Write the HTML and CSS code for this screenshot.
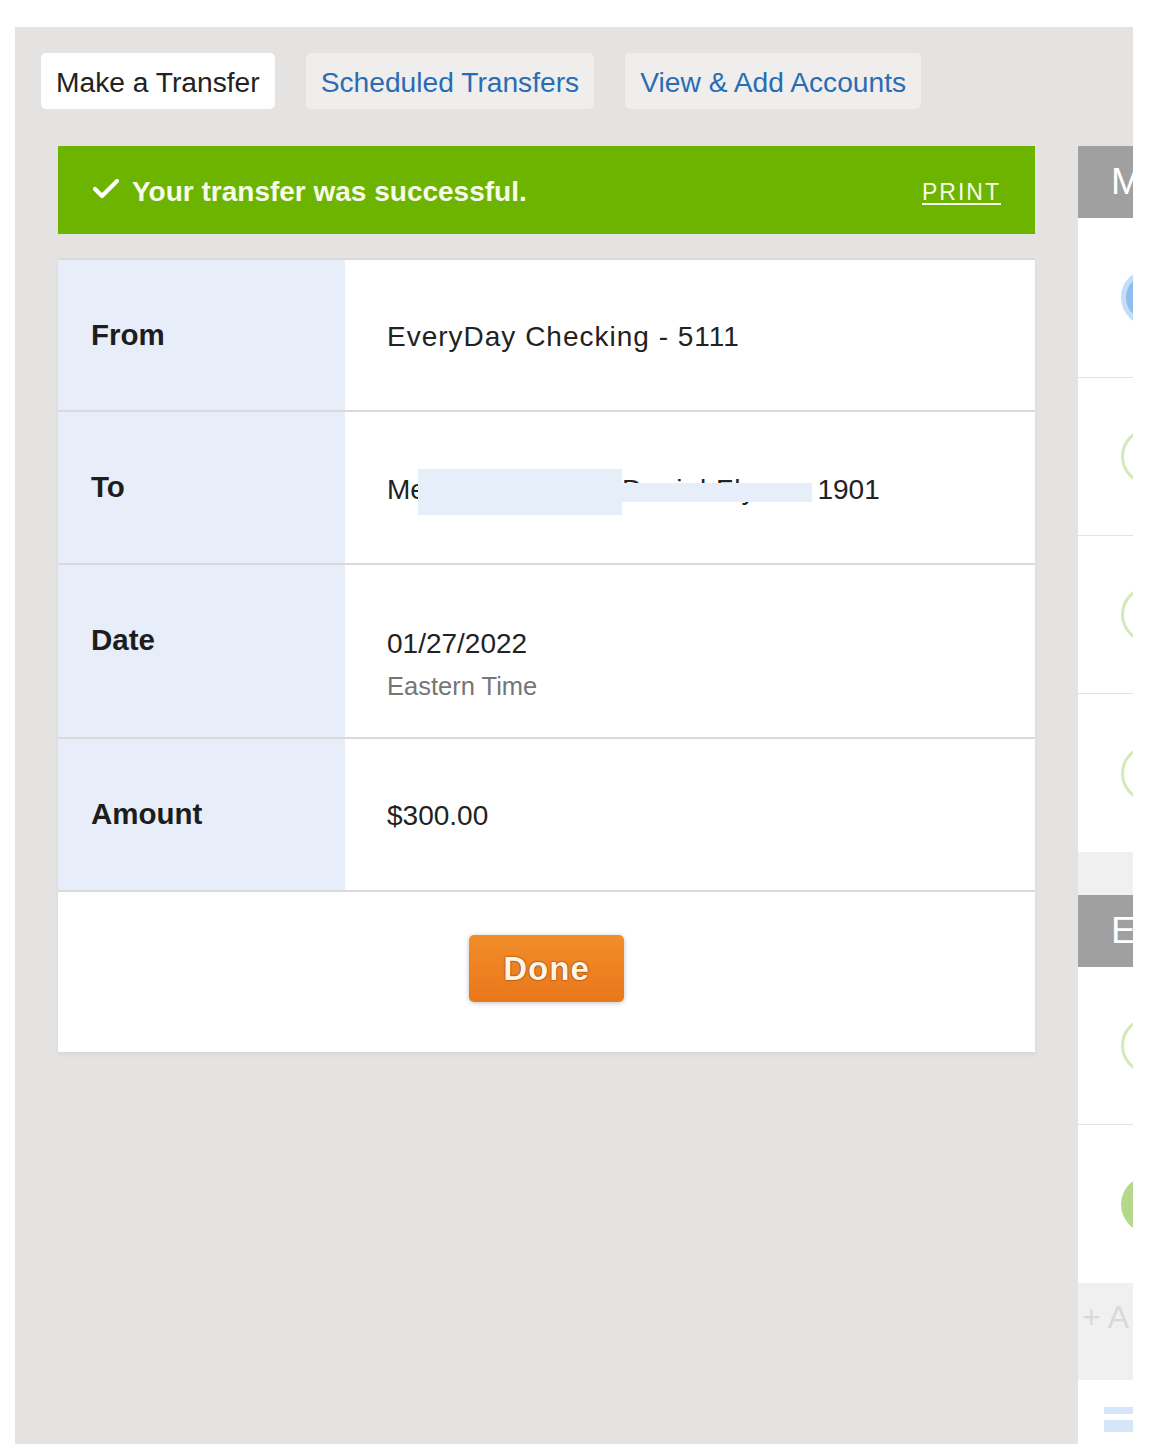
FILE: index.html
```
<!DOCTYPE html>
<html lang="en">
<head>
<meta charset="utf-8">
<title>Transfer Confirmation</title>
<link rel="stylesheet" href="styles.css">
</head>
<body>
<div class="panel">
  <nav class="tabs">
    <a class="tab tab-active">Make a Transfer</a>
    <a class="tab">Scheduled Transfers</a>
    <a class="tab">View &amp; Add Accounts</a>
  </nav>
  <div class="layout">
    <main class="main">
      <div class="banner">
        <div class="banner-msg">
          <svg class="check" width="26" height="20" viewBox="0 0 26 20"><polyline points="2,10 9,17 24,2" fill="none" stroke="#ffffff" stroke-width="4.2" stroke-linecap="round" stroke-linejoin="round"/></svg>
          <span>Your transfer was successful.</span>
        </div>
        <a class="print">PRINT</a>
      </div>
      <div class="details">
        <div class="row row-first">
          <div class="label">From</div>
          <div class="value value-wide">EveryDay Checking - 5111</div>
        </div>
        <div class="row">
          <div class="label">To</div>
          <div class="value value-to"><span class="to-line">Me<span class="redact-a"></span><span class="value-wide">Daniel Flynn - </span>1901<span class="redact-b"></span></span></div>
        </div>
        <div class="row row-tall">
          <div class="label">Date</div>
          <div class="value value-date">01/27/2022<div class="sub">Eastern Time</div></div>
        </div>
        <div class="row">
          <div class="label">Amount</div>
          <div class="value">$300.00</div>
        </div>
        <div class="actions">
          <button class="done">Done</button>
        </div>
      </div>
    </main>
    <aside class="side">
      <div class="side-head">M</div>
      <div class="side-item side-item-first"><span class="dot dot-blue"></span></div>
      <div class="side-item"><span class="dot dot-ring"></span></div>
      <div class="side-item"><span class="dot dot-ring"></span></div>
      <div class="side-item side-item-last"><span class="dot dot-ring"></span></div>
      <div class="side-gap"></div>
      <div class="side-head">E</div>
      <div class="side-item"><span class="dot dot-ring"></span></div>
      <div class="side-item side-item-last"><span class="dot dot-green"></span></div>
      <div class="side-add">+ A</div>
      <div class="side-foot">
        <span class="bar bar-1"></span>
        <span class="bar bar-2"></span>
      </div>
    </aside>
  </div>
</div>
</body>
</html>
```
FILE: styles.css
```
* { box-sizing: border-box; }
html, body { margin: 0; padding: 0; background: #ffffff; }
body { font-family: "Liberation Sans", Arial, Helvetica, sans-serif; color: #222222; }

.panel {
  margin: 27px 0 0 15px;
  width: 1118px;
  height: 1417px;
  background: #e4e3e1;
  overflow: hidden;
  padding-top: 26px;
}

.tabs {
  display: flex;
  gap: 31px;
  padding-left: 26px;
  height: 56px;
}
.tab {
  display: flex;
  align-items: center;
  padding: 3px 15px 0;
  height: 56px;
  font-size: 28.2px;
  color: #2a6cb3;
  background: #efeeed;
  border-radius: 5px;
  white-space: nowrap;
}
.tab-active { background: #ffffff; color: #222222; }

.layout {
  display: flex;
  gap: 43px;
  padding-left: 43px;
  margin-top: 37px;
}
.main { width: 977px; flex: none; }

.banner {
  height: 88px;
  background: #6db400;
  display: flex;
  align-items: center;
  justify-content: space-between;
  padding: 3px 34px 0 35px;
  color: #f6fbea;
}
.banner-msg {
  display: flex;
  align-items: center;
  gap: 13px;
  font-size: 28px;
  font-weight: bold;
}
.check { display: block; margin-top: -6px; }
.print {
  font-size: 23px;
  letter-spacing: 2px;
  text-decoration: underline;
  text-underline-offset: 3px;
  margin-top: 2px;
}

.details {
  margin-top: 24px;
  background: #ffffff;
  border-top: 2px solid #dadada;
  box-shadow: 0 3px 4px rgba(0, 0, 0, 0.05);
}
.row {
  display: flex;
  min-height: 153px;
  border-bottom: 2px solid #dadada;
}
.row-first { min-height: 152px; }
.row-tall { min-height: 174px; }
.label {
  width: 287px;
  flex: none;
  background: #e7eef9;
  padding: 58px 0 0 33px;
  font-size: 29.5px;
  font-weight: bold;
  line-height: 34px;
  color: #1d1d1d;
}
.value {
  padding: 60px 0 0 42px;
  font-size: 28px;
  line-height: 34px;
  color: #222222;
}
.value-to { padding-top: 57px; }
.value-date { padding-top: 62px; }
.value-wide { letter-spacing: 1px; }
.sub {
  font-size: 25.5px;
  line-height: 30px;
  margin-top: 10px;
  color: #767676;
}
.to-line { position: relative; display: inline-block; }
.redact-a {
  display: inline-block;
  width: 204px;
  height: 46px;
  margin-left: -8px;
  vertical-align: middle;
  background: #e6eef9;
}
.redact-b {
  position: absolute;
  left: 227px;
  top: 14px;
  width: 198px;
  height: 19px;
  background: #e6eef9;
}

.actions {
  display: flex;
  justify-content: center;
  padding: 43px 0 50px;
}
.done {
  width: 155px;
  height: 67px;
  border: none;
  border-radius: 5px;
  background: linear-gradient(#f28d2a, #e9771b);
  box-shadow: 0 1px 5px rgba(0, 0, 0, 0.25);
  font-family: "Liberation Sans", Arial, sans-serif;
  font-size: 33px;
  font-weight: bold;
  letter-spacing: 1px;
  color: #fff4e4;
  text-shadow: 0 0 2px #7a3600, 0 0 1px #7a3600;
  padding: 0;
}

.side {
  width: 320px;
  flex: none;
  background: #ffffff;
}
.side-head {
  height: 72px;
  background: #a0a0a0;
  color: #ffffff;
  font-size: 37px;
  display: flex;
  align-items: center;
  padding-left: 33px;
}
.side-item {
  height: 158px;
  border-bottom: 1px solid #e2e2e2;
  display: flex;
  align-items: center;
  padding-left: 43px;
}
.side-item-first { height: 160px; }
.side-item-last { border-bottom: none; }
.dot {
  width: 57px;
  height: 57px;
  border-radius: 50%;
  display: block;
}
.dot-blue { background: #8fbdf0; border: 5px solid #c4ddf8; }
.dot-ring { border: 3px solid #d5e8b8; background: #ffffff; }
.dot-green { background: #b4d98a; }
.side-gap { height: 43px; background: #f1f0f0; }
.side-add {
  height: 97px;
  background: #f1f0f0;
  color: #d9d9d9;
  font-size: 32px;
  display: flex;
  align-items: flex-start;
  padding: 16px 0 0 4px;
}
.side-foot {
  height: 70px;
  padding: 27px 0 0 26px;
  display: flex;
  flex-direction: column;
  gap: 6px;
}
.bar { display: block; width: 120px; background: #d6e6f9; }
.bar-1 { height: 7px; }
.bar-2 { height: 12px; }
```
